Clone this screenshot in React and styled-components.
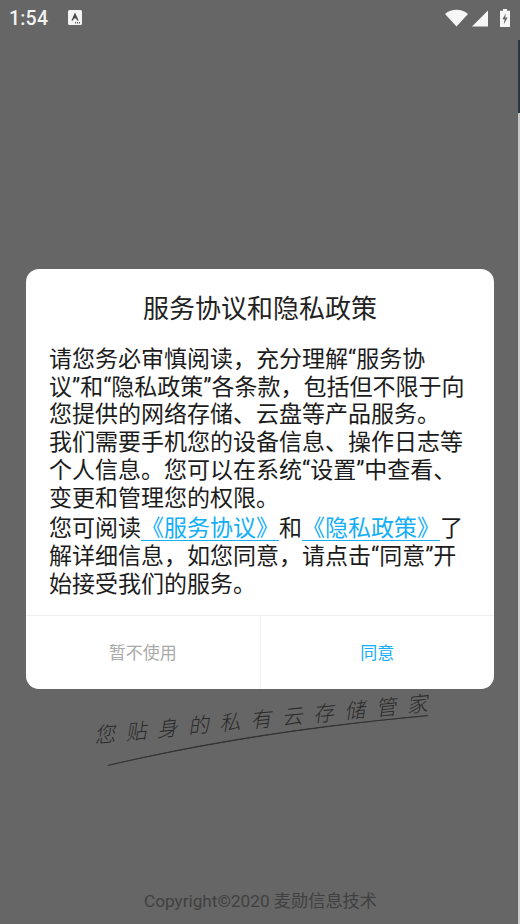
import React from "react";
import styled, { createGlobalStyle } from "styled-components";

const Global = createGlobalStyle`
  html, body { margin: 0; padding: 0; background: #666666; }
  * { box-sizing: border-box; }
`;
const CJK = `Roboto, "Noto Sans CJK SC", "Noto Sans", sans-serif`;
const C = "\uFF0C";

const Screen = styled.div`
  position: relative; width: 520px; height: 924px; overflow: hidden;
  background: #666666; display: flex; flex-direction: column; font-family: ${CJK};
`;
const EdgeStrip = styled.div`
  position: absolute; top: 0; right: 0; bottom: 0; width: 2px;
  background: linear-gradient(to bottom, #666 0, #666 40px, #2c3340 40px, #2c3340 113px, #c9c9c9 113px, #c9c9c9 200px, #cfcfcf 200px);
`;
const StatusBar = styled.div`
  height: 36px; flex: none; display: flex; align-items: center; padding: 0 10px 0 9px;
  color: #fff;
`;
const Clock = styled.span`
  font-family: Roboto, sans-serif; font-size: 19.5px; font-weight: 500; letter-spacing: .2px;
  color: #f2f2f2; width: 59px;
`;
const Spacer = styled.div`flex: 1;`;
const StatusIcons = styled.div`display: flex; align-items: center; gap: 4px;`;
const Middle = styled.div`
  flex: 1; display: flex; flex-direction: column; align-items: center; padding: 233px 26px 0;
  position: relative; z-index: 1;
`;
const Dialog = styled.div`
  width: 468px; height: 420px; background: #fff; border-radius: 13px;
  display: flex; flex-direction: column; overflow: hidden;
`;
const Title = styled.h1`
  margin: 0; padding-top: 21px; height: 77px; flex: none; text-align: center;
  font-size: 26px; font-weight: 400; line-height: 38px; color: #222;
`;
const Body = styled.div`
  flex: 1; padding: 0 23px; font-size: 23px; line-height: 27.7px; color: #1c1c1c;
`;
const Para = styled.p`
  margin: 0 0 3px;
`;
const Link = styled.span`
  color: #12aef8; text-decoration: underline; text-underline-offset: 4px; text-decoration-thickness: 1px;
`;
const Buttons = styled.div`
  flex: none; height: 74px; display: flex; border-top: 1px solid #f0f0f0;
`;
const Btn = styled.div`
  flex: 1; display: flex; align-items: center; justify-content: center; padding-bottom: 2px;
  font-size: 17px; color: ${p => p.$primary ? "#12aef8" : "#a9a9a9"};
  & + & { border-left: 1px solid #f0f0f0; }
`;
const Slogan = styled.div`
  position: absolute; left: 94px; top: 723px;
  transform: rotate(-5.5deg); transform-origin: left center;
  font-size: 21px; font-weight: 300; font-style: italic; letter-spacing: 10.4px; color: #2a2a2a;
  white-space: nowrap; line-height: 26px;
`;
const Stroke = styled.svg`position: absolute; left: 100px; top: 710px;`;
const Footer = styled.div`
  flex: none; height: 46px; text-align: center; font-size: 17.2px; line-height: 24px;
  color: #404040; padding: 11px 0 0 1px;
`;

const para1a = `请您务必审慎阅读${C}充分理解“服务协议”和“隐私政策”各条款${C}包括但不限于向您提供的网络存储、云盘等产品服务。`;
const para1b = `我们需要手机您的设备信息、操作日志等个人信息。您可以在系统“设置”中查看、变更和管理您的权限。`;
const para2 = `了解详细信息${C}如您同意${C}请点击“同意”开始接受我们的服务。`;

export default function App() {
  return (
    <Screen>
      <Global />
      <StatusBar>
        <Clock>1:54</Clock>
        <svg width="14" height="16" viewBox="0 0 14 16">
          <rect x="0" y="0" width="14" height="15" rx="1.5" fill="#f4f4f4" />
          <path d="M3.4 10.4 L7 2.4 L10.6 10.4 H8.9 L8.2 8.5 H5.8 L5.1 10.4 Z" fill="#4a4a4a" />
          <path d="M7 12.8h1.2M9 12.8h1.2M11 12.8h1" stroke="#666" strokeWidth="1.4" />
        </svg>
        <Spacer />
        <StatusIcons>
          <svg width="23" height="18" viewBox="0 0 23 18">
            <path d="M0 5 C6.5 -0.6 16.5 -0.6 23 5 L11.5 17.5 Z" fill="#f6f6f6" />
          </svg>
          <svg width="16" height="17" viewBox="0 0 16 17" style={{ marginRight: 8 }}>
            <path d="M16 0.5 V16.5 H0 Z" fill="#f6f6f6" />
          </svg>
          <svg width="10" height="18" viewBox="0 0 10 18">
            <path fillRule="evenodd" d="M3 0h4v1.8h3V18H0V1.8h3Z M5.8 4.2 L2.4 10.2 H4.6 L3.8 15.2 L7.6 8.4 H5.2 Z" fill="#f6f6f6" />
          </svg>
        </StatusIcons>
      </StatusBar>
      <Middle>
        <Dialog>
          <Title>服务协议和隐私政策</Title>
          <Body>
            <Para>{para1a}<br />{para1b}</Para>
            <Para>您可阅读<Link>《服务协议》</Link>和<Link>《隐私政策》</Link>{para2}</Para>
          </Body>
          <Buttons>
            <Btn>暂不使用</Btn>
            <Btn $primary>同意</Btn>
          </Buttons>
        </Dialog>
      </Middle>
      <Slogan>您贴身的私有云存储管家</Slogan>
      <Stroke width="330" height="60" viewBox="0 0 330 60">
        <path d="M8 55.4 C90 36 190 18 328 5.6 C190 18.6 90 36.6 8 55.4 Z" fill="#2e2e2e" stroke="#2e2e2e" strokeWidth=".7" />
      </Stroke>
      <Footer>Copyright©2020 麦勋信息技术</Footer>
      <EdgeStrip />
    </Screen>
  );
}
